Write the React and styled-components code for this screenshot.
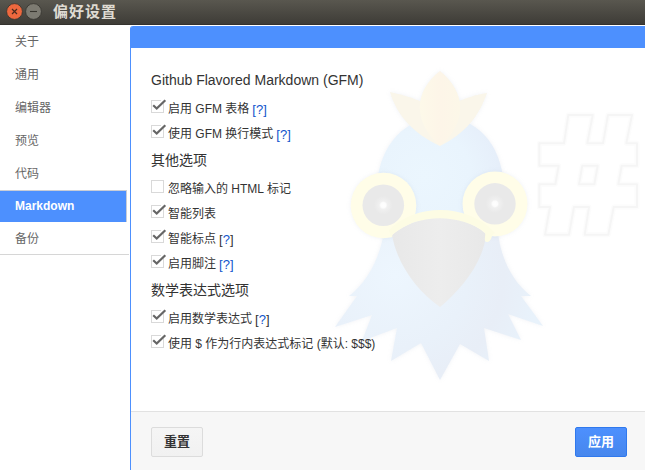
import React from "react";
import styled, { createGlobalStyle, css } from "styled-components";

const GlobalStyle = createGlobalStyle`
  * { box-sizing: border-box; }
  body {
    margin: 0;
    overflow: hidden;
    background: #fff;
    color: #333;
    font-family: "Liberation Sans", "Noto Sans CJK SC", sans-serif;
    font-size: 12px;
  }
`;

const Window = styled.div`
  display: flex;
  flex-direction: column;
  width: 645px;
  height: 470px;
  background: #fff;
`;

const TitleBar = styled.header`
  display: flex;
  align-items: center;
  height: 25px;
  flex: none;
  padding: 0 6px 2px;
  background: linear-gradient(#59574f, #3e3c37);
  border-bottom: 1px solid #34322e;
`;

const WindowButton = styled.svg`
  width: 17px;
  height: 17px;
  margin-right: 2px;
`;

const Title = styled.h1`
  margin: 1px 0 0 9px;
  color: #dfdbd2;
  font-size: 15px;
  line-height: 22px;
  font-weight: 700;
  letter-spacing: 1px;
`;

const Body = styled.div`
  display: flex;
  flex: 1;
  min-height: 0;
`;

const Sidebar = styled.nav`
  width: 130px;
  flex: none;
  padding-right: 1px;
`;

const Menu = styled.ul`
  list-style: none;
  margin: 0;
  padding: 0;
  border-bottom: 1px solid #d6d6d6;
`;

const MenuItem = styled.li`
  height: 33px;
  padding-left: 15px;
  line-height: 34px;
  color: #666;
  &:last-child {
    height: 32px;
  }
  ${(p) =>
    p.$active &&
    css`
      height: 32px;
      margin: 0 2px 0 0;
      line-height: 30px;
      border-top: 1px solid #c9cdd6;
      border-right: 1px solid #c9cdd6;
      background: #4d90fe;
      color: #fff;
      font-weight: 700;
    `}
`;

const Panel = styled.main`
  position: relative;
  display: flex;
  flex-direction: column;
  flex: 1;
  min-width: 0;
  margin-top: 1px;
  border-left: 1px solid #4d90fe;
  border-top-left-radius: 3px;
`;

const PanelBar = styled.div`
  height: 22px;
  flex: none;
  background: #4d90fe;
  border-top-left-radius: 2px;
`;

const Watermark = styled.svg`
  position: absolute;
  right: 0;
  top: 34px;
  width: 325px;
  height: 330px;
`;

const Content = styled.div`
  position: relative;
  flex: 1;
  padding: 17px 20px 0;
`;

const Heading = styled.h2`
  margin: 0;
  height: 30px;
  font-size: 14px;
  line-height: 30px;
  font-weight: 400;
`;

const Option = styled.label`
  display: flex;
  align-items: flex-start;
  height: 25px;
  padding-top: 2px;
  line-height: 25px;
  white-space: pre;
`;

const Check = styled.svg`
  width: 17px;
  height: 17px;
  flex: none;
`;

const Help = styled.span`
  margin-left: 3px;
  font-size: 13px;
  color: ${(p) => (p.$dark ? "#333" : "#15c")};
`;

const HelpLink = styled.a`
  color: #15c;
`;

const Footer = styled.footer`
  display: flex;
  align-items: flex-start;
  justify-content: space-between;
  height: 59px;
  flex: none;
  padding: 15px 18px 0 20px;
  background: #f7f7f7;
  border-top: 1px solid #e2e2e2;
`;

const Button = styled.button`
  width: 52px;
  height: 30px;
  padding: 0 0 3px;
  border: 1px solid ${(p) => (p.$primary ? "#3079ed" : "#dcdcdc")};
  border-radius: 2px;
  background: ${(p) =>
    p.$primary
      ? "linear-gradient(#4d90fe, #4787ed)"
      : "linear-gradient(#f5f5f5, #f1f1f1)"};
  color: ${(p) => (p.$primary ? "#fff" : "#333")};
  font: 700 13px "Liberation Sans", "Noto Sans CJK SC", sans-serif;
`;

const menu = ["关于", "通用", "编辑器", "预览", "代码", "Markdown", "备份"];

const sections = [
  {
    title: "Github Flavored Markdown (GFM)",
    options: [
      { label: "启用 GFM 表格", checked: true, help: "link" },
      { label: "使用 GFM 换行模式", checked: true, help: "link" },
    ],
  },
  {
    title: "其他选项",
    options: [
      { label: "忽略输入的 HTML 标记" },
      { label: "智能列表", checked: true },
      { label: "智能标点", checked: true, help: "dark" },
      { label: "启用脚注", checked: true, help: "link" },
    ],
  },
  {
    title: "数学表达式选项",
    options: [
      { label: "启用数学表达式", checked: true, help: "dark" },
      { label: "使用 $ 作为行内表达式标记 (默认: $$$)", checked: true },
    ],
  },
];

function Bird() {
  return (
    <Watermark viewBox="320 60 325 330">
      <defs>
        <radialGradient id="head" gradientUnits="userSpaceOnUse" cx="424" cy="176" r="85">
          <stop offset="0" stopColor="#ebf6fe" />
          <stop offset=".55" stopColor="#e9f4fd" />
          <stop offset="1" stopColor="#e5edf9" />
        </radialGradient>
        <radialGradient id="neck" gradientUnits="userSpaceOnUse" cx="395" cy="275" r="145">
          <stop offset="0" stopColor="#edf6fe" />
          <stop offset=".5" stopColor="#e9f1fa" />
          <stop offset=".75" stopColor="#e8eef7" />
          <stop offset="1" stopColor="#e8f2fb" />
        </radialGradient>
        <linearGradient id="petal">
          <stop offset="0" stopColor="#fdf9e9" />
          <stop offset=".5" stopColor="#fdf5e8" />
          <stop offset="1" stopColor="#fcf7e8" />
        </linearGradient>
        <linearGradient id="beak">
          <stop offset="0" stopColor="#e8e8e8" />
          <stop offset=".5" stopColor="#ededed" />
          <stop offset="1" stopColor="#e8e8e8" />
        </linearGradient>
        <radialGradient id="pupil">
          <stop offset="0" stopColor="#fff" />
          <stop offset=".13" stopColor="#fcfcfc" />
          <stop offset=".2" stopColor="#f0f0f0" />
          <stop offset=".45" stopColor="#e9e9e9" />
          <stop offset="1" stopColor="#e9e9e9" />
        </radialGradient>
        <filter id="glow" x="-10%" y="-10%" width="120%" height="120%" colorInterpolationFilters="sRGB">
          <feDropShadow dx="0" dy="0" stdDeviation="2" floodColor="#8b9bb8" floodOpacity=".13" />
        </filter>
      </defs>
      <g filter="url(#glow)">
        <path
          fill="url(#neck)"
          d="M385 220C384 252 368 282 349 296H357L335 327L372 315L362 341L397 328L391 361L421 343L440 380L460 344L489 361L484 328L521 340L508 314L543 326L521 296H531C513 282 498 257 497 220Z"
        />
        <path fill="url(#head)" d="M377 184C380 144 406 117 441 117S500 142 504 184L497 237H385Z" />
        <path fill="#faf6ea" d="M390 92C404 95 413 98 422 102L440 146C414 134 397 116 390 92Z" />
        <path fill="#faf6ea" d="M487 93C474 95 467 98 459 101L440 146C466 133 479 116 487 93Z" />
        <path fill="url(#petal)" d="M440 71C414 91 412 121 440 146C469 121 465 91 440 71Z" />
      </g>
      <g filter="url(#glow)">
        <circle cx="383.5" cy="205.5" r="32.8" fill="#fffde8" />
        <circle cx="495" cy="204" r="32.5" fill="#fffde8" />
      </g>
      <circle cx="383.3" cy="205.2" r="20.8" fill="url(#pupil)" />
      <circle cx="495" cy="203.8" r="20.7" fill="url(#pupil)" />
      <path fill="url(#beak)" d="M392 235C418 213 460 211 486 234C484 261 462 289 440 307C417 291 397 264 392 235Z" />
      <path
        fill="#fdfce4"
        d="M389 230C416 203 468 203 495 233C491 234 492 242 487 242C483 242 486 236 485 232C459 214 419 213 393 234L391 238Z"
      />
      <g fill="none" strokeLinejoin="round">
        <g stroke="#fcfcfc" strokeWidth="5">
          <path id="hash" d="M568.3 115H592.7L587.3 143.3H603L608 115H632L626.3 143.3H637V165.7H621.7L618.3 184.3H637V207H613.7L608.3 234.7H584.7L589 207H574L569 234.7H545L550 207H539.3V184.3H555.3L558.7 165.7H539.3V143.3H564ZM582.3 165.7H597.7L594.3 184.3H579Z" />
        </g>
        <use href="#hash" stroke="#f5f5f5" strokeWidth="2" />
      </g>
    </Watermark>
  );
}

function Checkbox({ checked }) {
  return (
    <Check viewBox="0 0 17 17">
      <rect x=".5" y="3.5" width="12" height="12" fill="#fff" stroke="#d9d9d9" />
      {checked && (
        <>
          <path d="M10 3.5h2.5V6" stroke="#fff" strokeWidth="1.4" fill="none" />
          <path d="M2.2 8.3L5.7 11.6L14.3 3.2" fill="none" stroke="#666" strokeWidth="2.2" />
        </>
      )}
    </Check>
  );
}

export default function App() {
  return (
    <Window>
      <GlobalStyle />
      <TitleBar>
        <WindowButton viewBox="0 0 17 17">
          <circle cx="8.5" cy="8.5" r="7.9" fill="#ee683e" stroke="#35332e" strokeWidth=".8" />
          <path d="M6 6L11 11M11 6L6 11" stroke="#4b2a1d" strokeWidth="1.2" />
        </WindowButton>
        <WindowButton viewBox="0 0 17 17">
          <circle cx="8.5" cy="8.5" r="7.9" fill="#7d7b72" stroke="#35332e" strokeWidth=".8" />
          <path d="M5 8.5H12" stroke="#38362f" strokeWidth="1.1" />
        </WindowButton>
        <Title>偏好设置</Title>
      </TitleBar>
      <Body>
        <Sidebar>
          <Menu>
            {menu.map((name) => (
              <MenuItem key={name} $active={name === "Markdown"}>
                {name}
              </MenuItem>
            ))}
          </Menu>
        </Sidebar>
        <Panel>
          <PanelBar />
          <Bird />
          <Content>
            {sections.map((section) => (
              <section key={section.title}>
                <Heading>{section.title}</Heading>
                {section.options.map((o) => (
                  <Option key={o.label}>
                    <Checkbox checked={o.checked} />
                    <span>{o.label}</span>
                    {o.help && (
                      <Help $dark={o.help === "dark"}>
                        [<HelpLink>?</HelpLink>]
                      </Help>
                    )}
                  </Option>
                ))}
              </section>
            ))}
          </Content>
          <Footer>
            <Button>重置</Button>
            <Button $primary>应用</Button>
          </Footer>
        </Panel>
      </Body>
    </Window>
  );
}
